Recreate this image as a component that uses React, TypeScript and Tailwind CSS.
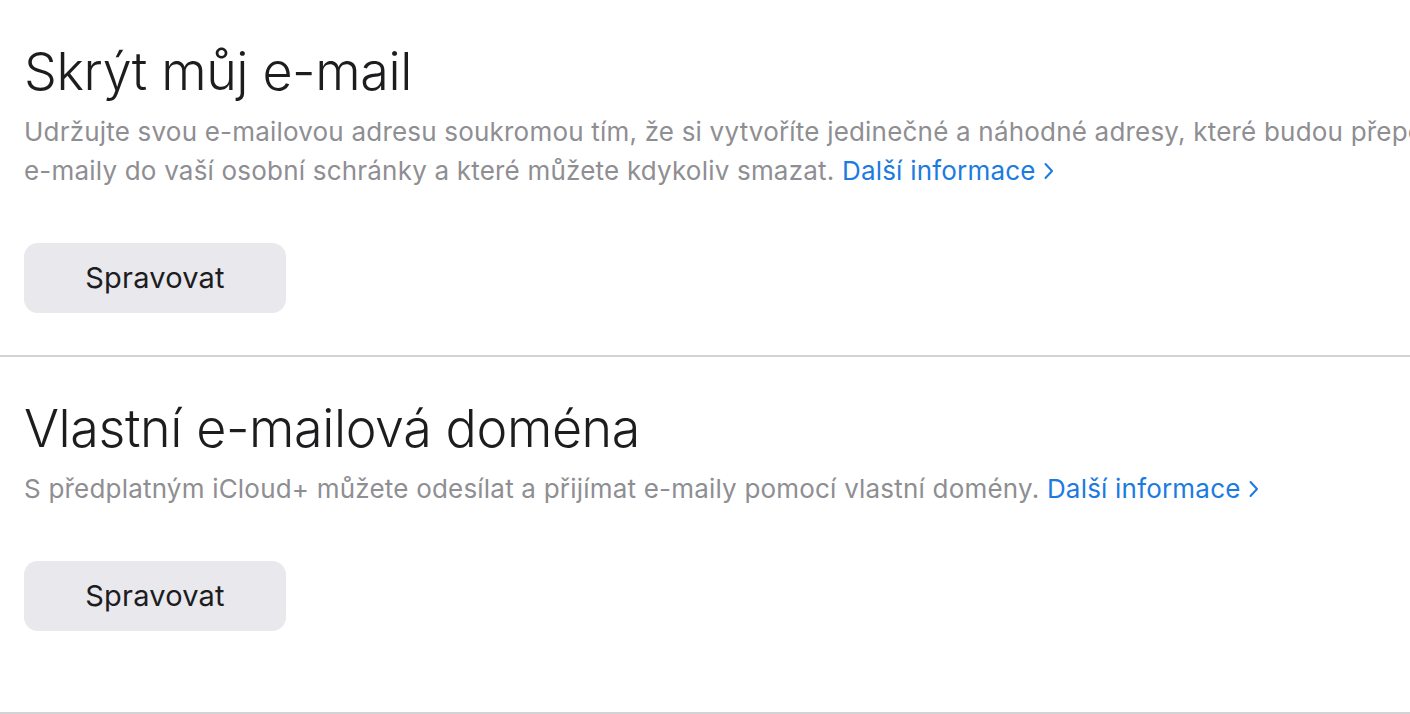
import React from "react";

const font = { fontFamily: "Inter, 'Noto Sans', sans-serif" };

function Chevron() {
  return (
    <svg width="12" height="20" viewBox="0 0 12 20" className="inline-block ml-[7px] align-[-1px]" fill="none">
      <path d="M2.5 3 L9 10 L2.5 17" stroke="currentColor" strokeWidth="2" strokeLinecap="round" strokeLinejoin="round" />
    </svg>
  );
}

function Section({ title, lines, btn, pb }: { title: string; lines: React.ReactNode[]; btn: string; pb: string }) {
  return (
    <section className="border-b-2 border-[#d2d2d7] pl-6">
      <h1 className="text-[52px] leading-[64px] font-light text-[#1d1d1f] tracking-[-0.4px] pt-[40px]">{title}</h1>
      <div className="mt-[8px] text-[26px] leading-[39px] text-[#8e8e93] tracking-[0.2px] whitespace-nowrap">
        {lines.map((l, i) => (
          <div key={i}>{l}</div>
        ))}
      </div>
      <div className={"pt-[53px] " + pb}>
        <button className="w-[262px] h-[70px] rounded-[14px] bg-[#e8e8ed] text-[29px] tracking-[0.2px] text-[#1d1d1f]">{btn}</button>
      </div>
    </section>
  );
}

function Link() {
  return (
    <span className="text-[#1b7be0]">
      Další informace
      <Chevron />
    </span>
  );
}

export default function App() {
  return (
    <div className="w-[1410px] h-[714px] overflow-hidden bg-white" style={font}>
      <Section
        title="Skrýt můj e-mail"
        lines={[
          "Udržujte svou e-mailovou adresu soukromou tím, že si vytvoříte jedinečné a náhodné adresy, které budou přeposílat",
          <>e-maily do vaší osobní schránky a které můžete kdykoliv smazat. <Link /></>,
        ]}
        btn="Spravovat"
        pb="pb-[42px]"
      />
      <Section
        title="Vlastní e-mailová doména"
        lines={[<>S předplatným iCloud+ můžete odesílat a přijímat e-maily pomocí vlastní domény. <Link /></>]}
        btn="Spravovat"
        pb="pb-[81px]"
      />
    </div>
  );
}
